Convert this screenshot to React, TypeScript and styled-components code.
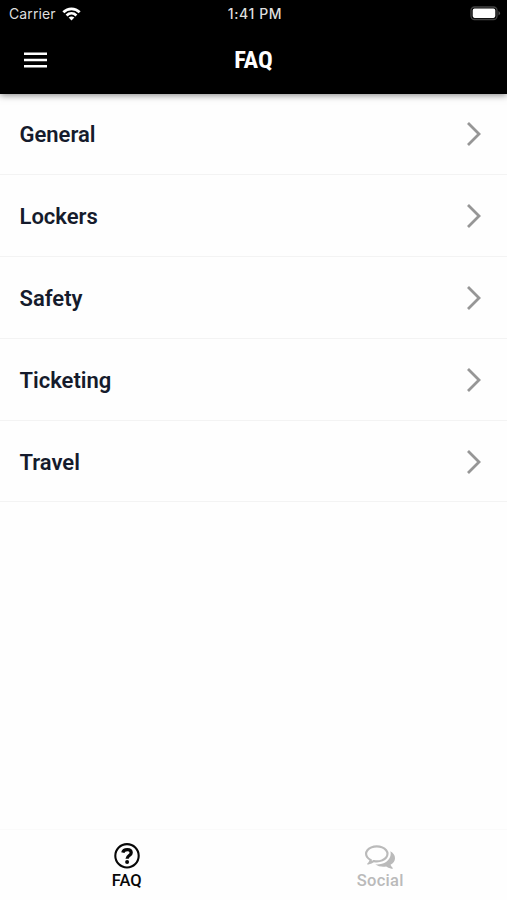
import React from 'react';
import styled, { createGlobalStyle } from 'styled-components';

const GlobalStyle = createGlobalStyle`
  * { box-sizing: border-box; }
  body { margin: 0; background: #fff; font-family: Roboto, sans-serif; }
`;

const Screen = styled.div`
  width: 507px;
  height: 900px;
  display: flex;
  flex-direction: column;
  overflow: hidden;
  background: #fefefe;
`;

const Header = styled.header`
  flex: 0 0 93.5px;
  background: #000;
  color: #fff;
  box-shadow: 0 1px 7px rgba(0, 0, 0, 0.5);
`;

const StatusBar = styled.div`
  height: 27px;
  display: grid;
  grid-template-columns: 1fr auto 1fr;
  align-items: center;
  padding: 0 6px 0 9px;
  color: #dedede;
  font: 500 14px/26px Inter, sans-serif;
`;

const Carrier = styled.div`
  display: flex;
  align-items: center;
  gap: 6px;
  font-weight: 400;
  letter-spacing: 0.1px;
`;

const Clock = styled.span`
  letter-spacing: 0.6px;
`;

const Battery = styled.svg`
  justify-self: end;
`;

const NavBar = styled.div`
  height: 66px;
  display: grid;
  grid-template-columns: 1fr auto 1fr;
  align-items: center;
  padding: 0 24px;
`;

const MenuButton = styled.button`
  width: 23px;
  height: 18px;
  padding: 0;
  border: 0;
  background: none;
  color: #fff;
  display: flex;
`;

const Title = styled.h1`
  margin: 0;
  font: 700 24.5px/30px 'Roboto Condensed', Roboto, sans-serif;
`;

const List = styled.ul`
  flex: 1;
  margin: 0;
  padding: 0;
  list-style: none;
`;

const Row = styled.li`
  height: 81.8px;
  display: flex;
  align-items: center;
  justify-content: space-between;
  padding: 1px 25px 0 19.5px;
  border-bottom: 1px solid #f3f3f3;
  color: #151b2c;
  font-size: 22px;
  font-weight: 600;
`;

const RowLabel = styled.span`
  padding-top: 1px;
`;

const TabBar = styled.nav`
  flex: 0 0 71px;
  display: grid;
  grid-template-columns: 1fr 1fr;
  border-top: 1px solid #fafafa;
  background: #fefefe;
`;

const Tab = styled.a<{ $active?: boolean }>`
  display: flex;
  flex-direction: column;
  align-items: center;
  padding-top: 12px;
  color: ${p => (p.$active ? '#080808' : '#bababa')};
  font-size: 16.5px;
  font-weight: 500;
  line-height: 22px;
  letter-spacing: ${p => (p.$active ? '0' : '0.3px')};
`;

const TabIcon = styled.span`
  height: 28px;
  display: flex;
  align-items: center;
`;

const Wifi = () => (
  <svg width="19" height="14" viewBox="0 0 20 14" fill="none" stroke="#fff" strokeWidth="2.8">
    <path d="M1.4 5.2C6.2.3 13.8.3 18.6 5.2" />
    <path d="M4.8 8.5C7.8 5.6 12.2 5.6 15.2 8.5" />
    <path d="M7 10.8Q10 8.4 13 10.8L10 13.8Z" fill="#fff" stroke="none" />
  </svg>
);

const Chevron = () => (
  <svg width="16" height="26" viewBox="0 0 16 26" fill="none" stroke="#969696" strokeWidth="2.8">
    <path d="M2 2L13 13L2 24" />
  </svg>
);

const Question = () => (
  <svg width="26" height="26" viewBox="0 0 26 26" fill="none" stroke="currentColor">
    <circle cx="13" cy="12.8" r="11.7" strokeWidth="2.1" />
    <path d="M8.8 9.6C9.6 5.7 17.2 5.6 17.2 9.7C17.2 12.6 13.1 12.4 13.1 15.8" strokeWidth="3.3" />
    <circle cx="13.1" cy="19.1" r="2" fill="currentColor" stroke="none" />
  </svg>
);

const Comments = () => (
  <svg width="30" height="30" viewBox="0 0 1792 1792" fill="currentColor">
    <path d="M704 384q-153 0-286 52t-211.5 141-78.5 191q0 82 53 158t149 132l97 56-35 84q34-20 62-39l44-31 53 10q78 14 153 14 153 0 286-52t211.5-141 78.5-191-78.5-191-211.5-141-286-52zm0-128q191 0 353.5 68.5t256.5 186.5 94 257-94 257-256.5 186.5-353.5 68.5q-86 0-176-16-124 88-278 128-36 9-86 16h-3q-11 0-20.5-8t-11.5-21q-1-3-1-6.5t.5-6.5 2-6l2.5-5 3.5-5.5 4-5 4.5-5 4-4.5q5-6 23-25t26-29.5 22.5-29 25-38.5 20.5-44q-124-72-195-177t-71-224q0-139 94-257t256.5-186.5 353.5-68.5zm822 1169q10 24 20.5 44t25 38.5 22.5 29 26 29.5 23 25q1 1 4 4.5t4.5 5 4 5 3.5 5.5l2.5 5 2 6 .5 6.5-1 6.5q-3 14-13 22t-22 7q-50-7-86-16-154-40-278-128-90 16-176 16-271 0-472-132 58 4 88 4 161 0 309-45t264-129q125-92 192-212t67-254q0-77-23-152 129 71 204 178t75 230q0 120-71 224.5t-195 176.5z" />
  </svg>
);

const topics = ['General', 'Lockers', 'Safety', 'Ticketing', 'Travel'];

export default function App() {
  return (
    <Screen>
      <GlobalStyle />
      <Header>
        <StatusBar>
          <Carrier>Carrier <Wifi /></Carrier>
          <Clock>1:41 PM</Clock>
          <Battery width="31" height="15" viewBox="0 0 31 15">
            <rect x="1" y="1" width="26" height="12.5" rx="3.5" fill="none" stroke="#444" strokeWidth="1.3" />
            <rect x="2.7" y="2.6" width="22.6" height="9.3" rx="1.8" fill="#fff" />
            <path d="M28.5 5Q31.5 7.2 28.5 9.5Z" fill="#555" />
          </Battery>
        </StatusBar>
        <NavBar>
          <MenuButton aria-label="Menu">
            <svg width="23" height="18" viewBox="0 0 23 18" stroke="currentColor" strokeWidth="2.5">
              <path d="M0 2.7H23M0 9H23M0 15.2H23" />
            </svg>
          </MenuButton>
          <Title>FAQ</Title>
        </NavBar>
      </Header>
      <List>
        {topics.map(topic => (
          <Row key={topic}><RowLabel>{topic}</RowLabel><Chevron /></Row>
        ))}
      </List>
      <TabBar>
        <Tab $active><TabIcon><Question /></TabIcon>FAQ</Tab>
        <Tab><TabIcon><Comments /></TabIcon>Social</Tab>
      </TabBar>
    </Screen>
  );
}
